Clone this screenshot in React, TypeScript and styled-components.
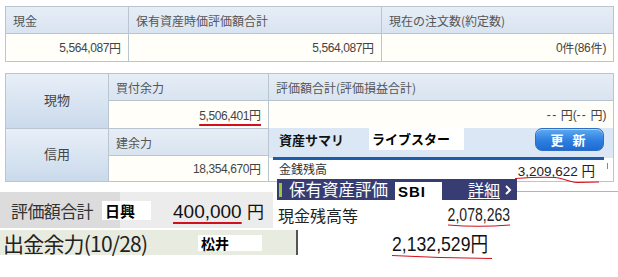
import React from "react";
import styled, { createGlobalStyle } from "styled-components";

const Global = createGlobalStyle`
  html, body { margin: 0; padding: 0; background: #fff; }
  body { font-family: "Noto Sans CJK JP", "Liberation Sans", sans-serif; color: #444; }
`;

const Page = styled.div`
  width: 618px;
  height: 277px;
  overflow: hidden;
  padding-top: 6px;
  box-sizing: border-box;
`;

const Grid = styled.div<{ $cols: string; $rows: string; $mt?: number }>`
  display: grid;
  grid-template-columns: ${(p) => p.$cols};
  grid-template-rows: ${(p) => p.$rows};
  gap: 1px;
  padding: 1px;
  background: #b9c5d1;
  width: max-content;
  margin-left: 5px;
  margin-top: ${(p) => p.$mt ?? 0}px;
`;

const HeadCell = styled.div`
  background: linear-gradient(#e6edf6, #d9e4f0);
  display: flex;
  align-items: center;
  padding-left: 7px;
  font-size: 12px;
  color: #555;
  white-space: nowrap;
`;

const ValueCell = styled.div`
  background: #fffef9;
  display: flex;
  align-items: center;
  justify-content: flex-end;
  padding-right: 7px;
  font-family: "Liberation Sans", "Noto Sans CJK JP", sans-serif;
  font-size: 12px;
  letter-spacing: -0.4px;
  color: #444;
  white-space: nowrap;
`;

const Yen = styled.span<{ $gap?: number; $size?: number }>`
  font-family: "Noto Sans CJK JP", sans-serif;
  margin-left: ${(p) => p.$gap ?? 0}px;
  font-size: ${(p) => (p.$size ? `${p.$size}px` : "inherit")};
  letter-spacing: 0;
`;

const Dashes = styled.span`
  letter-spacing: 1.5px;
`;

const SideCell = styled.div`
  grid-row: span 2;
  background: linear-gradient(#e8eff8, #cadaeb);
  display: flex;
  align-items: center;
  justify-content: center;
  font-size: 13px;
  color: #444;
  padding-bottom: 3px;
`;

const RedLine = styled.span`
  text-decoration: underline;
  text-decoration-color: #d0101c;
  text-decoration-thickness: 1.5px;
  text-underline-offset: 4px;
`;

/* ---------- summary panel ---------- */
const SummaryCell = styled.div`
  grid-column: 3;
  grid-row: 3 / span 2;
  background: #fff;
  display: flex;
  flex-direction: column;
  margin-top: -1px;
`;

const SummaryHead = styled.div`
  height: 30px;
  background: #dbe7f5;
  display: flex;
  align-items: flex-start;
  padding: 0 9px 0 10px;
  box-sizing: border-box;
`;

const SummaryTitle = styled.div`
  height: 22px;
  line-height: 24px;
  font-size: 13px;
  font-weight: 700;
  color: #111;
  width: 90px;
`;

const Tag = styled.div<{ $w: number; $h: number; $size: number }>`
  background: #fff;
  width: ${(p) => p.$w}px;
  height: ${(p) => p.$h}px;
  line-height: ${(p) => p.$h}px;
  font-size: ${(p) => p.$size}px;
  font-weight: 700;
  color: #000;
  box-sizing: border-box;
  padding-left: 3px;
  white-space: nowrap;
  flex: none;
`;

const Latin = styled.span`
  font-family: "Liberation Sans", sans-serif;
  letter-spacing: 1px;
`;

const UpdateButton = styled.button`
  margin-left: auto;
  width: 69px;
  height: 23px;
  border-radius: 7px;
  border: 1px solid #2f6fc3;
  background: linear-gradient(#5eaaf0, #2d7fe0 55%, #1f6ad2);
  box-shadow: inset 0 1px 0 rgba(255, 255, 255, 0.5);
  color: #fff;
  font-family: "Noto Sans CJK JP", sans-serif;
  font-weight: 700;
  font-size: 13px;
  letter-spacing: 3px;
  padding: 0;
`;

const BlueRule = styled.div`
  height: 3px;
  background: #1d5cab;
  margin: -1px 9px 0 4px;
`;

const SummaryRow = styled.div`
  height: 18px;
  display: flex;
  align-items: flex-start;
  padding: 0 5px 0 10px;
  font-size: 12px;
  line-height: 18px;
  color: #333;
`;

const SummaryAmount = styled.span`
  margin-left: auto;
  position: relative;
  font-family: "Liberation Sans", sans-serif;
  font-size: 13.5px;
  line-height: 18px;
  padding-top: 1px;
  color: #222;
`;

const Tick = styled.span`
  width: 1px;
  height: 6px;
  background: #888;
  margin-left: 12px;
  margin-top: 3px;
`;

const Scribble = styled.svg<{ $l?: number; $r?: number; $t: number }>`
  position: absolute;
  ${(p) => (p.$r !== undefined ? `right: ${p.$r}px;` : `left: ${p.$l ?? 0}px;`)}
  top: ${(p) => p.$t}px;
  overflow: visible;
  pointer-events: none;
`;

/* narrow, tall numerals like the original bitmap gothic */
const Squeezed = styled.span<{ $scale: number; $origin: string }>`
  display: inline-block;
  transform: scaleX(${(p) => p.$scale});
  transform-origin: ${(p) => p.$origin} center;
`;

/* ---------- bottom collage ---------- */
const Bottom = styled.div`
  position: relative;
  z-index: 1;
  margin-top: -3px;
`;

const RowA = styled.div`
  height: 50px;
  display: flex;
`;

const EvalBlock = styled.div`
  margin-top: 13px;
  width: 273px;
  height: 36px;
  background: linear-gradient(to right, #dcdcdc 0 120px, #ececec 120px);
  display: flex;
  align-items: center;
  padding-left: 11px;
  box-sizing: border-box;
`;

const BigLabel = styled.span`
  font-size: 17px;
  color: #333;
  letter-spacing: -0.6px;
`;

const EvalAmount = styled.span`
  margin-left: 22px;
  font-family: "Liberation Sans", sans-serif;
  font-size: 19px;
  color: #111;
  white-space: nowrap;
`;

const RightCol = styled.div`
  margin-left: 4px;
  flex: 1;
  display: flex;
  flex-direction: column;
`;

const NavyRow = styled.div`
  display: flex;
  height: 21px;
`;

const NavyBar = styled.div`
  width: 240px;
  height: 21px;
  background: #373d72;
  display: flex;
  align-items: flex-end;
  color: #fff;
  flex: none;
`;

const Accent = styled.span`
  width: 3px;
  height: 14px;
  background: #9bc53d;
  margin: 0 7px 3px 2px;
  flex: none;
`;

const NavyTitle = styled.span`
  font-size: 16.5px;
  line-height: 21px;
  width: 106px;
  white-space: nowrap;
`;

const DetailLink = styled.span`
  margin-left: 26px;
  font-size: 16px;
  line-height: 21px;
  text-decoration: underline;
  text-underline-offset: 2px;
  display: flex;
  align-items: center;
`;

const RuleFiller = styled.div`
  flex: 1;
  height: 12px;
  border-bottom: 1px solid #b4b4b4;
`;

const CashRow = styled.div`
  width: 233px;
  height: 29px;
  display: flex;
  align-items: center;
  justify-content: space-between;
  padding-left: 1px;
  box-sizing: border-box;
`;

const CashLabel = styled.span`
  font-size: 16px;
  color: #222;
`;

const CashAmount = styled.span`
  position: relative;
  font-family: "Liberation Sans", sans-serif;
  font-size: 18px;
  line-height: 22px;
  color: #222;
`;

const RowB = styled.div`
  margin-top: 1px;
  height: 25px;
  display: flex;
`;

const WithdrawRow = styled.div`
  width: 298px;
  height: 25px;
  background: #e8ebdf;
  border-right: 2px solid #555;
  display: flex;
  align-items: center;
  padding-left: 3px;
  box-sizing: border-box;
  flex: none;
`;

const WithdrawLabel = styled.span`
  font-size: 21px;
  color: #222;
  width: 195px;
  white-space: nowrap;
  letter-spacing: -0.8px;
`;

const BigAmount = styled.span`
  position: relative;
  margin-left: 94px;
  font-family: "Liberation Sans", sans-serif;
  font-size: 21px;
  line-height: 25px;
  color: #111;
  white-space: nowrap;
`;

export default function App() {
  return (
    <>
      <Global />
      <Page>
        <Grid $cols="122px 252px 231px" $rows="26px 27px">
          <HeadCell>現金</HeadCell>
          <HeadCell>保有資産時価評価額合計</HeadCell>
          <HeadCell>現在の注文数(約定数)</HeadCell>
          <ValueCell>
            5,564,087<Yen>円</Yen>
          </ValueCell>
          <ValueCell>
            5,564,087<Yen>円</Yen>
          </ValueCell>
          <ValueCell>
            0<Yen>件</Yen>(86<Yen>件</Yen>)
          </ValueCell>
        </Grid>

        <Grid $cols="102px 159px 344px" $rows="26px 27px 26px 25px" $mt={11}>
          <SideCell>現物</SideCell>
          <HeadCell>買付余力</HeadCell>
          <HeadCell>評価額合計(評価損益合計)</HeadCell>
          <ValueCell>
            <RedLine>
              5,506,401<Yen>円</Yen>
            </RedLine>
          </ValueCell>
          <ValueCell>
            <Dashes>--</Dashes>
            <Yen $gap={3}>円</Yen>(<Dashes>--</Dashes>
            <Yen $gap={3}>円</Yen>)
          </ValueCell>
          <SideCell>信用</SideCell>
          <HeadCell>建余力</HeadCell>
          <SummaryCell>
            <SummaryHead>
              <SummaryTitle>資産サマリ</SummaryTitle>
              <Tag $w={95} $h={22} $size={13}>ライブスター</Tag>
              <UpdateButton>更 新</UpdateButton>
            </SummaryHead>
            <BlueRule />
            <SummaryRow>
              金銭残高
              <SummaryAmount>
                3,209,622 <Yen>円</Yen>
                <Scribble $l={-3} $t={17} width="84" height="7">
                  <path
                    d="M0 1.5 C 14 0.5, 30 0, 40 0.5 C 48 1, 54 5, 62 5.5 L 84 5"
                    fill="none"
                    stroke="#d0101c"
                    strokeWidth="1.2"
                  />
                </Scribble>
              </SummaryAmount>
              <Tick />
            </SummaryRow>
          </SummaryCell>
          <ValueCell>
            18,354,670<Yen>円</Yen>
          </ValueCell>
        </Grid>

        <Bottom>
          <RowA>
            <EvalBlock>
              <BigLabel>評価額合計</BigLabel>
              <Tag $w={49} $h={19} $size={15} style={{ marginLeft: 9 }}>
                日興
              </Tag>
              <EvalAmount>
                <RedLine>400,000</RedLine> <Yen $size={17}>円</Yen>
              </EvalAmount>
            </EvalBlock>
            <RightCol>
              <NavyRow>
                <NavyBar>
                  <Accent />
                  <NavyTitle>保有資産評価</NavyTitle>
                  <Tag $w={47} $h={18} $size={15}>
                    <Latin>SBI</Latin>
                  </Tag>
                  <DetailLink>
                    詳細
                    <svg width="12" height="10" viewBox="0 0 12 10" style={{ marginLeft: 3 }}>
                      <polyline points="3,1 7,5 3,9" fill="none" stroke="#fff" strokeWidth="2" />
                    </svg>
                  </DetailLink>
                </NavyBar>
                <RuleFiller />
              </NavyRow>
              <CashRow>
                <CashLabel>現金残高等</CashLabel>
                <CashAmount>
                  <Squeezed $scale={0.78} $origin="right">2,078,263</Squeezed>
                  <Scribble $r={0} $t={20} width="62" height="4">
                    <path d="M0 1 Q 30 3.5 62 1" fill="none" stroke="#d0101c" strokeWidth="1.2" />
                  </Scribble>
                </CashAmount>
              </CashRow>
            </RightCol>
          </RowA>
          <RowB>
            <WithdrawRow>
              <WithdrawLabel>出金余力(10/28)</WithdrawLabel>
              <Tag $w={64} $h={16} $size={14}>松井</Tag>
            </WithdrawRow>
            <BigAmount>
              <Squeezed $scale={0.84} $origin="left">
                2,132,529<Yen>円</Yen>
              </Squeezed>
              <Scribble $l={0} $t={25} width="100" height="5">
                <path d="M0 0.5 C 30 2, 60 3, 100 3.5" fill="none" stroke="#d0101c" strokeWidth="1.2" />
              </Scribble>
            </BigAmount>
          </RowB>
        </Bottom>
      </Page>
    </>
  );
}
